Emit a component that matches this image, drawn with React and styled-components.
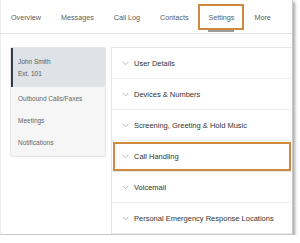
import React from "react";
import styled, {createGlobalStyle} from "styled-components";

const GlobalStyle = createGlobalStyle`
  html, body {
    margin: 0;
    padding: 0;
    background: #ffffff;
  }
  body {
    font-family: "Liberation Sans", Arial, sans-serif;
  }
`;

const tabs = ["Overview", "Messages", "Call Log", "Contacts", "Settings", "More"];
const sideItems = ["Outbound Calls/Faxes", "Meetings", "Notifications"];
const sections = [
    "User Details",
    "Devices & Numbers",
    "Screening, Greeting & Hold Music",
    "Call Handling",
    "Voicemail",
    "Personal Emergency Response Locations",
];

const Chevron = () => (
    <svg width="7" height="5" viewBox="0 0 7 5">
        <polyline points="0.5,0.8 3.5,3.8 6.5,0.8" fill="none" stroke="#b0b0b0" strokeWidth="0.9"/>
    </svg>
);

const App = () => {
    return <>
        <GlobalStyle/>
        <Card>
            <TabBar>
                {tabs.map(t => <Tab key={t} $active={t === "Settings"}>{t}</Tab>)}
            </TabBar>
            <Content>
                <Sidebar>
                    <UserBlock>
                        <div>John Smith</div>
                        <div>Ext. 101</div>
                    </UserBlock>
                    {sideItems.map(i => <SideItem key={i}>{i}</SideItem>)}
                </Sidebar>
                <Panel>
                    {sections.map(s => <Row key={s} $active={s === "Call Handling"}>
                        <Chevron/>
                        <span>{s}</span>
                    </Row>)}
                </Panel>
            </Content>
        </Card>
    </>
}

const Card = styled.div`
  width: 293px;
  height: 235px;
  box-sizing: border-box;
  border-left: 1px solid #ececec;
  border-right: 1px solid #c8c8c8;
  border-bottom: 1px solid #c8c8c8;
  box-shadow: 2px 2px 3px rgba(0, 0, 0, 0.35);
  background: #ffffff;
  overflow: hidden;
  display: flex;
  flex-direction: column;
`;

const TabBar = styled.div`
  height: 34px;
  box-sizing: border-box;
  padding-top: 4px;
  border-bottom: 1px solid #e4e4e4;
  display: flex;
  align-items: flex-start;
`;

const Tab = styled.div`
  position: relative;
  height: 26px;
  box-sizing: border-box;
  padding: 0 8px;
  display: flex;
  align-items: center;
  font-size: 7.2px;
  color: #5a5a5a;
  border: 2px solid ${p => p.$active ? "#d0893f" : "transparent"};

  &::after {
    content: "";
    display: ${p => p.$active ? "block" : "none"};
    position: absolute;
    left: 8px;
    right: 8px;
    bottom: -4px;
    height: 2px;
    background: #9a9a9a;
  }
`;

const Content = styled.div`
  flex: 1;
  display: flex;
  align-items: flex-start;
  gap: 5px;
  padding: 13px 0 0 9px;
  min-height: 0;
`;

const Sidebar = styled.div`
  width: 96px;
  flex-shrink: 0;
  box-sizing: border-box;
  background: #f6f6f6;
  border: 1px solid #e6e6e6;
  border-radius: 2px;
  padding-bottom: 3px;
`;

const UserBlock = styled.div`
  background: #dfe3e8;
  border-left: 2px solid #2e3c4d;
  padding: 8px 5px 7px;
  font-size: 6.5px;
  line-height: 12px;
  color: #4f5b68;
`;

const SideItem = styled.div`
  height: 22px;
  padding-left: 7px;
  display: flex;
  align-items: center;
  font-size: 6.5px;
  color: #666666;
`;

const Panel = styled.div`
  flex: 1;
  align-self: stretch;
  border-top: 1px solid #e6e6e6;
  border-left: 1px solid #e6e6e6;
`;

const Row = styled.div`
  height: 30px;
  border-bottom: 1px solid #ececec;
  display: flex;
  align-items: center;
  gap: 5px;
  padding-left: 10px;
  font-size: 7.5px;
  color: #333333;
  outline: ${p => p.$active ? "2px solid #d0893f" : "none"};
  outline-offset: -3px;
`;

export default App;
